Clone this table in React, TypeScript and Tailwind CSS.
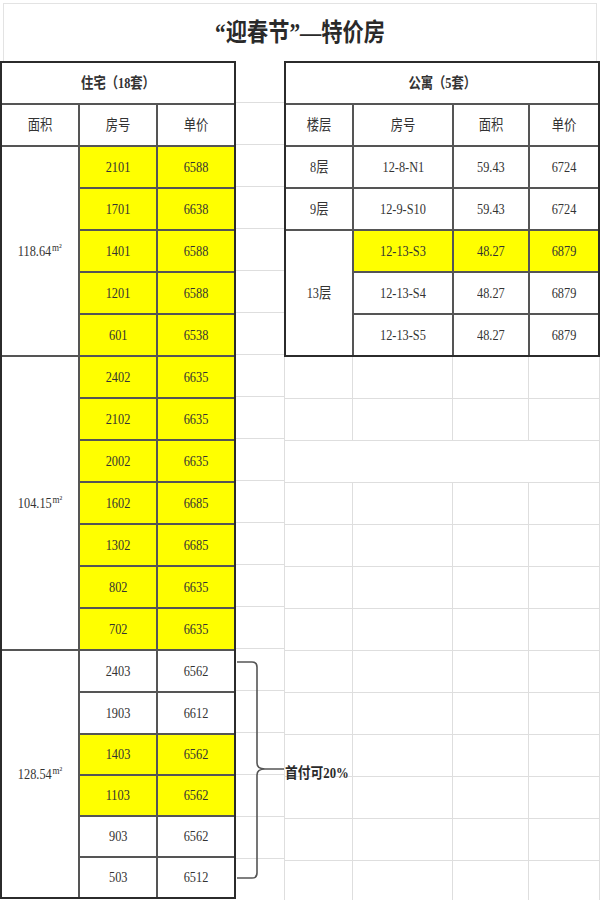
import { Fragment } from "react";

const homes = [
  {
    area: "118.64",
    span: "row-span-5",
    units: [
      { no: "2101", price: "6588", hot: true },
      { no: "1701", price: "6638", hot: true },
      { no: "1401", price: "6588", hot: true },
      { no: "1201", price: "6588", hot: true },
      { no: "601", price: "6538", hot: true },
    ],
  },
  {
    area: "104.15",
    span: "row-span-7",
    units: [
      { no: "2402", price: "6635", hot: true },
      { no: "2102", price: "6635", hot: true },
      { no: "2002", price: "6635", hot: true },
      { no: "1602", price: "6685", hot: true },
      { no: "1302", price: "6685", hot: true },
      { no: "802", price: "6635", hot: true },
      { no: "702", price: "6635", hot: true },
    ],
  },
  {
    area: "128.54",
    span: "row-span-6",
    units: [
      { no: "2403", price: "6562", hot: false },
      { no: "1903", price: "6612", hot: false },
      { no: "1403", price: "6562", hot: true },
      { no: "1103", price: "6562", hot: true },
      { no: "903", price: "6562", hot: false },
      { no: "503", price: "6512", hot: false },
    ],
  },
];

const flats = [
  { floor: "8层", span: "", units: [{ no: "12-8-N1", area: "59.43", price: "6724", hot: false }] },
  { floor: "9层", span: "", units: [{ no: "12-9-S10", area: "59.43", price: "6724", hot: false }] },
  {
    floor: "13层",
    span: "row-span-3",
    units: [
      { no: "12-13-S3", area: "48.27", price: "6879", hot: true },
      { no: "12-13-S4", area: "48.27", price: "6879", hot: false },
      { no: "12-13-S5", area: "48.27", price: "6879", hot: false },
    ],
  },
];

function Cell({ children, hot = false, className = "" }: { children?: React.ReactNode; hot?: boolean; className?: string }) {
  return (
    <div className={`flex items-center justify-center text-[15px] ${hot ? "bg-[#ffff00]" : "bg-white"} ${className}`}>
      <span className="inline-block scale-x-[0.82] whitespace-nowrap">{children}</span>
    </div>
  );
}

function HomeTable() {
  return (
    <div className="grid w-[236px] shrink-0 grid-cols-[76px_76px_76px] grid-rows-[40px_40px_repeat(14,40px)_39px_39px_39px_39px] gap-[2px] border-2 border-[#2b2b2b] bg-[#555]">
      <Cell className="col-span-3 font-bold">住宅（18套）</Cell>
      <Cell>面积</Cell>
      <Cell>房号</Cell>
      <Cell>单价</Cell>
      {homes.map((g) => (
        <Fragment key={g.area}>
          <Cell className={g.span}>
            {g.area}
            <span className="relative -top-[5px] ml-[1px] text-[11px]">m²</span>
          </Cell>
          {g.units.map((u) => (
            <Fragment key={u.no}>
              <Cell hot={u.hot}>{u.no}</Cell>
              <Cell hot={u.hot}>{u.price}</Cell>
            </Fragment>
          ))}
        </Fragment>
      ))}
    </div>
  );
}

function FlatTable() {
  return (
    <div className="grid w-[316px] grid-cols-[66px_98px_74px_68px] grid-rows-[40px_40px_repeat(5,40px)] gap-[2px] border-2 border-[#2b2b2b] bg-[#555]">
      <Cell className="col-span-4 font-bold">公寓（5套）</Cell>
      <Cell>楼层</Cell>
      <Cell>房号</Cell>
      <Cell>面积</Cell>
      <Cell>单价</Cell>
      {flats.map((f) => (
        <Fragment key={f.floor}>
          <Cell className={f.span}>{f.floor}</Cell>
          {f.units.map((u) => (
            <Fragment key={u.no}>
              <Cell hot={u.hot}>{u.no}</Cell>
              <Cell hot={u.hot}>{u.area}</Cell>
              <Cell hot={u.hot}>{u.price}</Cell>
            </Fragment>
          ))}
        </Fragment>
      ))}
    </div>
  );
}

// light spreadsheet gridlines under the flat table
function SheetGrid() {
  return (
    <div className="grid grid-cols-[68px_100px_76px_72px]">
      {Array.from({ length: 13 }).map((_, r) =>
        r === 2 ? (
          <div key={r} className="col-span-4 h-[42px] border-x border-b border-[#dedede]" />
        ) : (
          <Fragment key={r}>
            <div className="h-[42px] border-b border-l border-[#dedede]" />
            <div className="h-[42px] border-b border-l border-[#dedede]" />
            <div className="h-[42px] border-b border-l border-[#dedede]" />
            <div className="h-[42px] border-x border-b border-[#dedede]" />
          </Fragment>
        )
      )}
    </div>
  );
}

export default function App() {
  return (
    <div className="relative h-[900px] w-[600px] overflow-hidden bg-white font-['Liberation_Serif','Noto_Sans_CJK_SC',serif] text-[#333]">
      {/* title */}
      <div className="mx-[3px] mt-[3px] flex h-[58px] items-center justify-center border-x border-t border-[#e3e3e3]">
        <h1 className="text-[25px] font-bold text-[#2a2a2a]">
          <span className="inline-block scale-x-[0.85]">“迎春节”—特价房</span>
        </h1>
      </div>

      <div className="flex items-start">
        <HomeTable />
        <div className="w-[48px] shrink-0">
          {Array.from({ length: 20 }).map((_, i) => (
            <div key={i} className="h-[42px] border-b border-[#dedede]" />
          ))}
        </div>
        <div className="w-[316px] shrink-0">
          <FlatTable />
          <SheetGrid />
        </div>
      </div>

      {/* bracket + note */}
      <svg className="absolute left-[236px] top-[658px]" width="52" height="224" viewBox="0 0 52 224" fill="none">
        <path
          d="M1 4 H16 Q21 4 21 9 V105 Q21 111 29 111 M29 111 Q21 111 21 117 V215 Q21 220 16 220 H1 M29 111 H48"
          stroke="#555"
          strokeWidth="1.6"
        />
      </svg>
      <div className="absolute left-[285px] top-[761px] text-[15px] font-bold leading-[24px] text-[#2a2a2a]">
        <span className="inline-block origin-left scale-x-[0.85]">首付可20%</span>
      </div>
    </div>
  );
}
